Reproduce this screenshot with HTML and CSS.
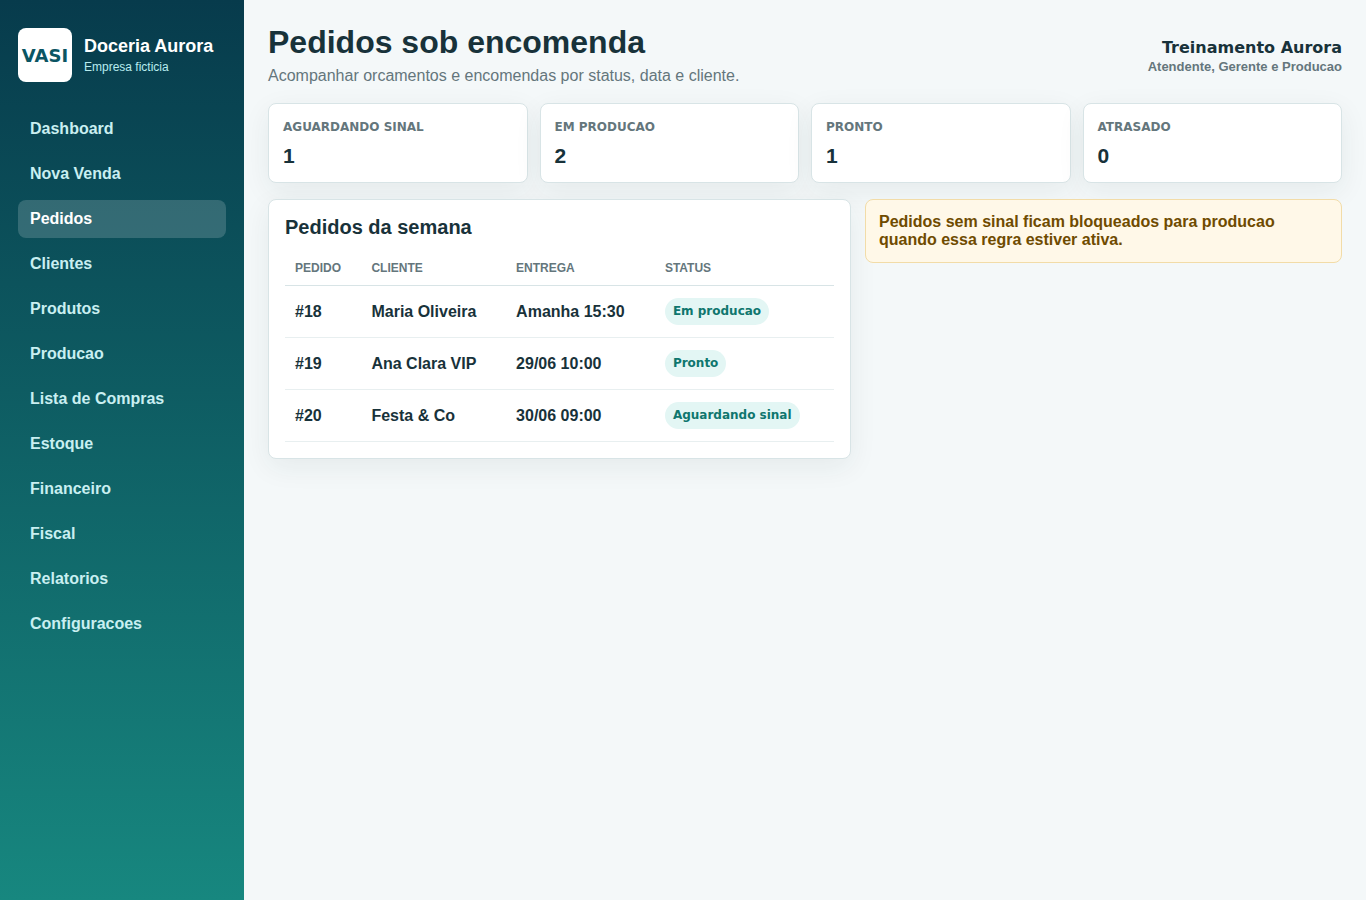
FILE: index.html
```html
<!DOCTYPE html>
<html lang="pt-BR">
	<head>
		<meta charset="UTF-8" />
		<meta name="viewport" content="width=device-width, initial-scale=1.0" />
		<title>Pedidos sob encomenda</title>
		<link rel="stylesheet" href="styles.css">
	</head>
	<body>
		<div class="app">
			<aside class="sidebar">
				<div class="brand">
					<div class="logo">VASI</div>
					<div class="brand-text">
						<strong>Doceria Aurora</strong>
						<span>Empresa ficticia</span>
					</div>
				</div>
				<nav class="menu">
					<a href="#">Dashboard</a>
					<a href="#">Nova Venda</a>
					<a href="#" class="active" aria-current="page">Pedidos</a>
					<a href="#">Clientes</a>
					<a href="#">Produtos</a>
					<a href="#">Producao</a>
					<a href="#">Lista de Compras</a>
					<a href="#">Estoque</a>
					<a href="#">Financeiro</a>
					<a href="#">Fiscal</a>
					<a href="#">Relatorios</a>
					<a href="#">Configuracoes</a>
				</nav>
			</aside>

			<main>
				<header class="topbar">
					<div>
						<h1>Pedidos sob encomenda</h1>
						<p>Acompanhar orcamentos e encomendas por status, data e cliente.</p>
					</div>
					<div class="user">
						<strong>Treinamento Aurora</strong>
						<span>Atendente, Gerente e Producao</span>
					</div>
				</header>

				<section class="stats">
					<article class="card stat">
						<span>Aguardando sinal</span>
						<strong>1</strong>
					</article>
					<article class="card stat">
						<span>Em producao</span>
						<strong>2</strong>
					</article>
					<article class="card stat">
						<span>Pronto</span>
						<strong>1</strong>
					</article>
					<article class="card stat">
						<span>Atrasado</span>
						<strong>0</strong>
					</article>
				</section>

				<section class="columns">
					<div class="card panel">
						<h2>Pedidos da semana</h2>
						<table>
							<thead>
								<tr>
									<th>Pedido</th>
									<th>Cliente</th>
									<th>Entrega</th>
									<th>Status</th>
								</tr>
							</thead>
							<tbody>
								<tr>
									<td>#18</td>
									<td>Maria Oliveira</td>
									<td>Amanha 15:30</td>
									<td><span class="pill">Em producao</span></td>
								</tr>
								<tr>
									<td>#19</td>
									<td>Ana Clara VIP</td>
									<td>29/06 10:00</td>
									<td><span class="pill">Pronto</span></td>
								</tr>
								<tr>
									<td>#20</td>
									<td>Festa &amp; Co</td>
									<td>30/06 09:00</td>
									<td><span class="pill">Aguardando sinal</span></td>
								</tr>
							</tbody>
						</table>
					</div>
					<div class="notice">
						Pedidos sem sinal ficam bloqueados para producao quando essa regra estiver ativa.
					</div>
				</section>
			</main>
		</div>
	</body>
</html>
```

FILE: styles.css
```css
:root {
	--ink: #18323a;
	--muted: #64767c;
	--line: #d8e4e6;
	--background: #f4f8f9;
	--teal: #0f766e;
	--heavy: "Arial Black", "DejaVu Sans", sans-serif; /* for the 900 weight labels */
}

* {
	box-sizing: border-box;
}

body {
	margin: 0;
	font-family: "Liberation Sans", Arial, sans-serif;
	background: var(--background);
	color: var(--ink);
}

.app {
	display: grid;
	grid-template-columns: 244px 1fr;
	min-height: 100vh;
}

/* Sidebar */
.sidebar {
	padding: 28px 18px;
	background: linear-gradient(180deg, #073b4c, #17877f);
	color: white;
}

.brand {
	display: flex;
	align-items: center;
	gap: 12px;
	margin-bottom: 28px;
}

.logo {
	display: grid;
	place-items: center;
	width: 54px;
	height: 54px;
	border-radius: 8px;
	background: white;
	color: #0b5563;
	font-family: var(--heavy);
	font-size: 18px;
	font-weight: 900;
}

.brand-text strong {
	display: block;
	font-size: 18px;
}

.brand-text span {
	display: block;
	margin-top: 3px;
	font-size: 12px;
	color: #b8ecef;
}

.menu {
	display: grid;
	gap: 7px;
}

.menu a {
	padding: 10px 12px;
	border-radius: 8px;
	color: #c9eff1;
	font-weight: 700;
	line-height: 18px;
	text-decoration: none;
}

.menu a.active {
	background: rgba(255, 255, 255, 0.17);
	color: white;
}

/* Content */
main {
	padding: 24px;
}

.topbar {
	display: flex;
	justify-content: space-between;
	align-items: center;
	margin-bottom: 18px;
}

h1 {
	margin: 0;
	font-size: 32px;
	line-height: 37px;
}

.topbar p {
	margin: 6px 0 0;
	color: var(--muted);
}

.user {
	text-align: right;
}

.user strong {
	display: block;
	font-family: var(--heavy);
	font-size: 16px;
	font-weight: 900;
	line-height: 23px;
}

.user span {
	display: block;
	font-size: 13px;
	font-weight: 700;
	color: var(--muted);
}

.card {
	background: white;
	border: 1px solid var(--line);
	border-radius: 8px;
	box-shadow: 0 8px 28px rgba(24, 50, 58, 0.07);
}

.stats {
	display: grid;
	grid-template-columns: repeat(4, 1fr);
	gap: 12px;
	margin-bottom: 16px;
}

.stat {
	padding: 14px;
}

.stat span {
	display: block;
	font-family: var(--heavy);
	font-size: 12px;
	font-weight: 900;
	line-height: 18px;
	text-transform: uppercase;
	color: var(--muted);
}

.stat strong {
	display: block;
	margin-top: 8px;
	font-size: 21px;
	line-height: 24px;
}

.columns {
	display: grid;
	grid-template-columns: 11fr 9fr;
	align-items: start;
	gap: 14px;
}

.panel {
	padding: 16px;
}

h2 {
	margin: 0 0 12px;
	font-size: 20px;
}

table {
	width: 100%;
	border-collapse: collapse;
}

th,
td {
	padding: 12px 10px;
	border-bottom: 1px solid #e8eff0;
	text-align: left;
	font-weight: 700;
}

th {
	padding: 10px;
	border-color: var(--line);
	font-size: 12px;
	text-transform: uppercase;
	color: var(--muted);
}

.pill {
	display: inline-flex;
	padding: 5px 8px;
	border-radius: 999px;
	background: #e3f6f4;
	color: var(--teal);
	font-family: var(--heavy);
	font-size: 12px;
	font-weight: 900;
	line-height: 17px;
	vertical-align: middle;
}

.notice {
	padding: 13px;
	border: 1px solid #f2dca8;
	border-radius: 8px;
	background: #fff8e8;
	color: #6f4b00;
	font-weight: 700;
}

@media (max-width: 900px) {
	.app,
	.columns {
		grid-template-columns: 1fr;
	}

	.stats {
		grid-template-columns: repeat(2, 1fr);
	}
}
```
